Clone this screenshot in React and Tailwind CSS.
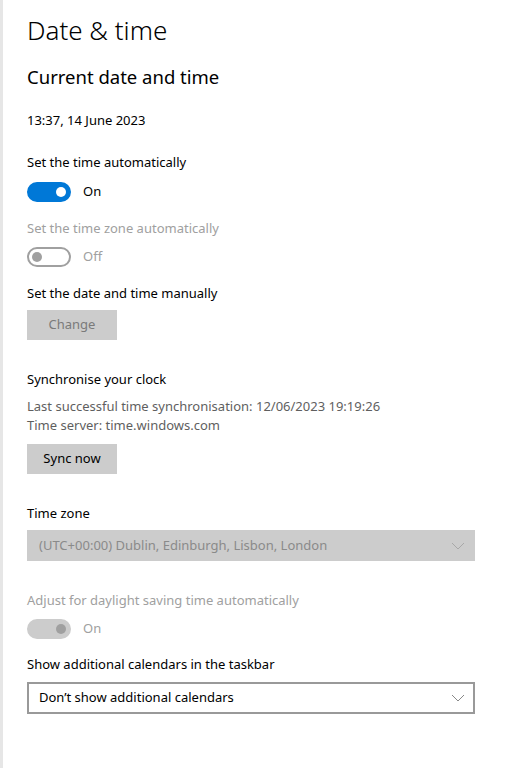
import React, { useState } from "react";

const font = { fontFamily: '"Noto Sans", "Open Sans", sans-serif' };

function Chevron({ className }) {
	return (
		<svg width="14" height="8" viewBox="0 0 14 8" className={className}>
			<path d="M1 1l6 6 6-6" fill="none" stroke="currentColor" strokeWidth="1" />
		</svg>
	);
}

function Toggle({ on, disabled, onClick }) {
	let track = "bg-[#0078d7] border-[#0078d7]";
	let knob = "bg-white";
	if (!on) {
		track = "bg-white border-[#a0a0a0]";
		knob = "bg-[#a0a0a0]";
	}
	if (disabled && on) {
		track = "bg-[#cccccc] border-[#cccccc]";
		knob = "bg-[#a0a0a0]";
	}
	return (
		<div className="flex items-center gap-3 h-5">
			<button
				onClick={onClick}
				className={`w-[44px] h-5 rounded-full border-2 flex items-center px-[3px] ${on ? "justify-end" : "justify-start"} ${track}`}
			>
				<span className={`w-[10px] h-[10px] rounded-full ${knob}`} />
			</button>
			<span className={`text-[13px] ${disabled ? "text-[#a0a0a0]" : "text-black"}`}>{on ? "On" : "Off"}</span>
		</div>
	);
}

function Label({ muted, className = "", children }) {
	return (
		<p className={`text-[13px] leading-5 ${muted ? "text-[#a0a0a0]" : "text-black"} ${className}`}>{children}</p>
	);
}

export default function App() {
	const [autoTime, setAutoTime] = useState(true);

	return (
		<div className="w-[516px] h-[768px] bg-white flex" style={font}>
			<div className="w-[3px] bg-[#e6e6e6]" />
			<main className="flex-1 pl-6 pt-[12px] text-black">
				<h1 className="text-[26px] font-light leading-9">Date &amp; time</h1>
				<h2 className="text-[18.5px] leading-7 mt-[15px]">Current date and time</h2>
				<Label className="mt-[19px]">13:37, 14 June 2023</Label>

				<Label className="mt-[22px]">Set the time automatically</Label>
				<div className="mt-[10px]">
					<Toggle on={autoTime} onClick={() => setAutoTime(!autoTime)} />
				</div>

				<Label muted className="mt-[16px]">Set the time zone automatically</Label>
				<div className="mt-[9px]">
					<Toggle on={false} disabled />
				</div>

				<Label className="mt-[16px]">Set the date and time manually</Label>
				<button className="mt-[7px] w-[90px] h-[30px] bg-[#cccccc] text-[13px] text-[#7a7a7a]">Change</button>

				<Label className="mt-[29px]">Synchronise your clock</Label>
				<div className="mt-[8px] text-[13px] text-[#5f5f5f] leading-[19px]">
					<p>Last successful time synchronisation: 12/06/2023 19:19:26</p>
					<p>Time server: time.windows.com</p>
				</div>
				<button className="mt-[9px] w-[90px] h-[30px] bg-[#cccccc] text-[13px]">Sync now</button>

				<Label className="mt-[29px]">Time zone</Label>
				<div className="mt-[7px] w-[448px] h-[31px] bg-[#cccccc] flex items-center justify-between pl-3 pr-[10px] text-[13px] text-[#8a8a8a]">
					<span>(UTC+00:00) Dublin, Edinburgh, Lisbon, London</span>
					<Chevron className="text-[#a8a8a8]" />
				</div>

				<Label muted className="mt-[29px]">Adjust for daylight saving time automatically</Label>
				<div className="mt-[9px]">
					<Toggle on disabled />
				</div>

				<Label className="mt-[15px]">Show additional calendars in the taskbar</Label>
				<div className="mt-[8px] w-[448px] h-[32px] border-2 border-[#999999] flex items-center justify-between pl-[10px] pr-[8px] text-[13px]">
					<span>Don’t show additional calendars</span>
					<Chevron className="text-[#888888]" />
				</div>
			</main>
		</div>
	);
}
